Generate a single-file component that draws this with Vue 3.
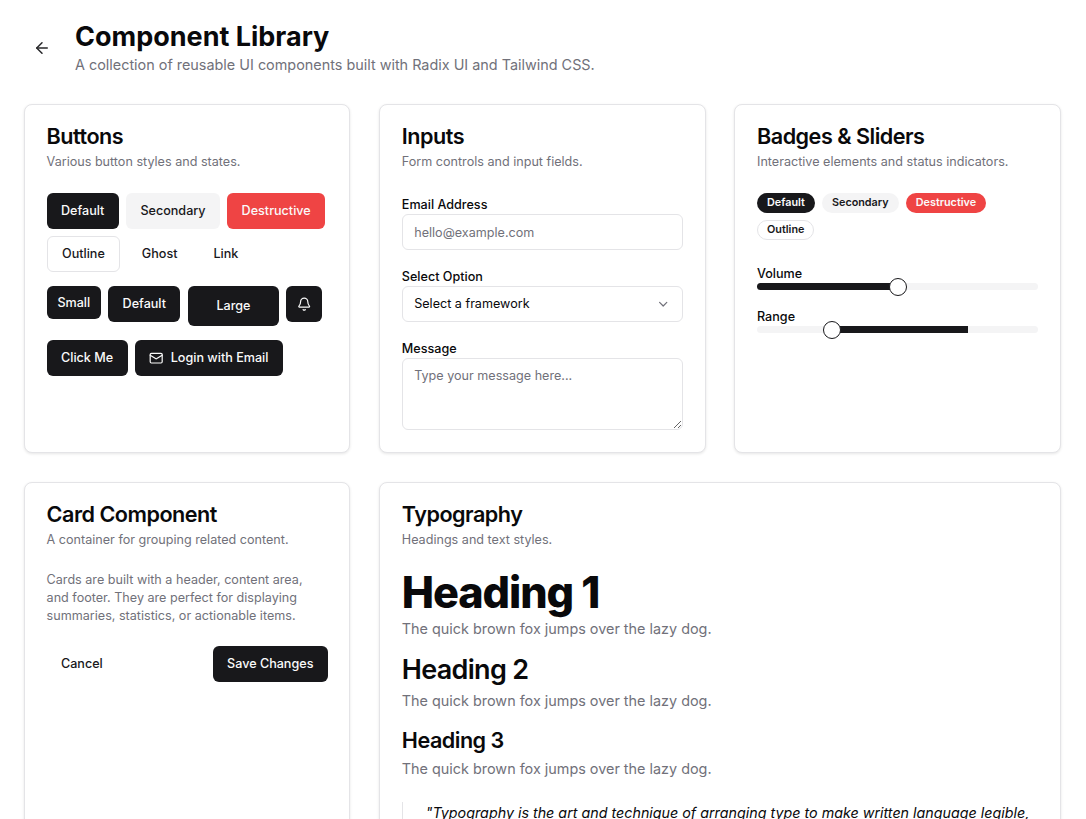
<script setup>
const quick = 'The quick brown fox jumps over the lazy dog.'
</script>

<template>
  <main class="page">
    <header class="head">
      <button class="back" aria-label="Back">
        <svg width="18" height="18" viewBox="0 0 24 24" fill="none" stroke="currentColor" stroke-width="2" stroke-linecap="round" stroke-linejoin="round"><path d="m12 19-7-7 7-7"/><path d="M19 12H5"/></svg>
      </button>
      <div>
        <h1 class="title">Component Library</h1>
        <p class="subtitle">A collection of reusable UI components built with Radix UI and Tailwind CSS.</p>
      </div>
    </header>

    <div class="grid">
      <section class="card">
        <h2 class="card-title">Buttons</h2>
        <p class="card-desc">Various button styles and states.</p>
        <div class="groups">
          <div class="row">
            <button class="btn primary">Default</button>
            <button class="btn secondary">Secondary</button>
            <button class="btn danger">Destructive</button>
            <button class="btn outline">Outline</button>
            <button class="btn ghost">Ghost</button>
            <button class="btn ghost">Link</button>
          </div>
          <div class="row">
            <button class="btn primary small">Small</button>
            <button class="btn primary">Default</button>
            <button class="btn primary large">Large</button>
            <button class="btn primary icon" aria-label="Notifications">
              <svg width="14.4" height="14.4" viewBox="0 0 24 24" fill="none" stroke="currentColor" stroke-width="2" stroke-linecap="round" stroke-linejoin="round"><path d="M10.268 21a2 2 0 0 0 3.464 0"/><path d="M3.262 15.326A1 1 0 0 0 4 17h16a1 1 0 0 0 .74-1.673C19.41 13.956 18 12.499 18 8A6 6 0 0 0 6 8c0 4.499-1.411 5.956-2.738 7.326"/></svg>
            </button>
          </div>
          <div class="row">
            <button class="btn primary">Click Me</button>
            <button class="btn primary with-icon">
              <svg width="14.4" height="14.4" viewBox="0 0 24 24" fill="none" stroke="currentColor" stroke-width="2" stroke-linecap="round" stroke-linejoin="round"><rect x="2" y="4" width="20" height="16" rx="2"/><path d="m22 7-8.97 5.7a1.94 1.94 0 0 1-2.06 0L2 7"/></svg>
              Login with Email
            </button>
          </div>
        </div>
      </section>

      <section class="card">
        <h2 class="card-title">Inputs</h2>
        <p class="card-desc">Form controls and input fields.</p>
        <div class="fields">
          <label class="field">
            <span class="label">Email Address</span>
            <input class="control" type="email" placeholder="hello@example.com" />
          </label>
          <div class="field">
            <span class="label">Select Option</span>
            <button class="control select">
              Select a framework
              <svg width="14.4" height="14.4" viewBox="0 0 24 24" fill="none" stroke="#71717a" stroke-width="2" stroke-linecap="round" stroke-linejoin="round"><path d="m6 9 6 6 6-6"/></svg>
            </button>
          </div>
          <label class="field">
            <span class="label">Message</span>
            <textarea class="control area" placeholder="Type your message here..."></textarea>
          </label>
        </div>
      </section>

      <section class="card">
        <h2 class="card-title">Badges &amp; Sliders</h2>
        <p class="card-desc">Interactive elements and status indicators.</p>
        <div class="badges">
          <span class="badge b-primary">Default</span>
          <span class="badge b-secondary">Secondary</span>
          <span class="badge b-danger">Destructive</span>
          <span class="badge b-outline">Outline</span>
        </div>
        <div class="sliders">
          <div class="slider-block">
            <span class="label">Volume</span>
            <div class="track">
              <div class="fill fill-volume"></div>
              <span class="thumb thumb-volume"></span>
            </div>
          </div>
          <div class="slider-block">
            <span class="label">Range</span>
            <div class="track">
              <div class="fill fill-range"></div>
              <span class="thumb thumb-range"></span>
            </div>
          </div>
        </div>
      </section>

      <section class="card">
        <h2 class="card-title">Card Component</h2>
        <p class="card-desc">A container for grouping related content.</p>
        <p class="card-body">Cards are built with a header, content area, and footer. They are perfect for displaying summaries, statistics, or actionable items.</p>
        <div class="card-foot">
          <button class="btn ghost">Cancel</button>
          <button class="btn primary">Save Changes</button>
        </div>
      </section>

      <section class="card wide">
        <h2 class="card-title">Typography</h2>
        <p class="card-desc">Headings and text styles.</p>
        <div class="type">
          <h1 class="h1">Heading 1</h1>
          <p class="muted m1">{{ quick }}</p>
          <h2 class="h2">Heading 2</h2>
          <p class="muted">{{ quick }}</p>
          <h3 class="h3">Heading 3</h3>
          <p class="muted">{{ quick }}</p>
          <blockquote class="quote">"Typography is the art and technique of arranging type to make written language legible, readable, and appealing when displayed."</blockquote>
        </div>
      </section>
    </div>
  </main>
</template>

<style>
html, body { overflow: hidden; background: #fff; }
</style>

<style scoped>
* { box-sizing: border-box; }
.page {
  width: 1086px;
  padding: 20px 25.2px 24px 24px;
  font-family: Inter, "Noto Sans", sans-serif;
  color: #09090b;
}
.head { display: flex; align-items: center; gap: 15px; margin-bottom: 29px; }
.back {
  width: 36px; height: 36px; border: 0; background: none; color: #27272a;
  display: flex; align-items: center; justify-content: center; padding: 0;
}
.title { margin: 0; font-size: 27px; line-height: 33px; font-weight: 700; }
.subtitle { margin: 2px 0 0; font-size: 14.4px; line-height: 20px; color: #71717a; }
.grid { display: grid; grid-template-columns: repeat(3, 1fr); gap: 28.8px; }
.card {
  border: 1px solid #e4e4e7; border-radius: 8px; background: #fff;
  padding: 17px 21.6px 22px; min-height: 349px;
  box-shadow: 0 1px 3px rgba(0,0,0,.1);
}
.wide { grid-column: span 2; }
.card-title { margin: 0; font-size: 21.6px; line-height: 28px; font-weight: 600; letter-spacing: -0.5px; }
.card-desc { margin: 3px 0 0; font-size: 12.6px; line-height: 18px; color: #71717a; }
.groups { margin-top: 22px; display: flex; flex-direction: column; gap: 14px; }
.row { display: flex; flex-wrap: wrap; align-items: flex-start; gap: 7px 7.2px; }
.btn {
  height: 36px; padding: 0 14.4px; border-radius: 6px; border: 0;
  font: 500 12.6px/18px Inter, sans-serif; display: inline-flex; align-items: center; justify-content: center;
}
.primary { background: #18181b; color: #fafafa; }
.secondary { background: #f4f4f5; color: #18181b; }
.danger { background: #ef4444; color: #fafafa; }
.outline { background: #fff; color: #18181b; border: 1px solid #e4e4e7; }
.ghost { background: transparent; color: #18181b; }
.small { height: 33px; padding: 0 10.8px; }
.large { height: 40px; padding: 0 28.8px; }
.icon { width: 36px; padding: 0; }
.with-icon { gap: 7.2px; }
.fields { margin-top: 25px; display: flex; flex-direction: column; gap: 18px; }
.field { display: flex; flex-direction: column; }
.label { font-size: 12.6px; line-height: 18px; font-weight: 500; color: #09090b; }
.control {
  width: 100%; height: 36px; border: 1px solid #e4e4e7; border-radius: 6px; background: #fff;
  padding: 0 11.4px; font: 400 12.6px/18px Inter, sans-serif; color: #09090b; outline: 0;
}
.control::placeholder { color: #71717a; opacity: 1; }
.select { display: flex; align-items: center; justify-content: space-between; }
.area { height: 72px; padding: 8px 11.4px; display: block; resize: vertical; }
.badges { margin-top: 22px; display: flex; flex-wrap: wrap; gap: 7.2px; }
.badge {
  height: 20px; padding: 0 10px; border-radius: 999px; font-size: 10.8px; font-weight: 600;
  line-height: 18px; display: inline-flex; align-items: center;
}
.b-primary { background: #18181b; color: #fafafa; }
.b-secondary { background: #f4f4f5; color: #18181b; }
.b-danger { background: #ef4444; color: #fafafa; }
.b-outline { background: #fff; color: #18181b; border: 1px solid #e4e4e7; padding: 0 9px; }
.sliders { margin-top: 25px; display: flex; flex-direction: column; gap: 18px; }
.slider-block { display: flex; flex-direction: column; }
.track { position: relative; height: 7px; background: #f4f4f5; border-radius: 999px; }
.fill { position: absolute; top: 0; bottom: 0; background: #18181b; }
.fill-volume { left: 0; width: 50%; border-radius: 999px 0 0 999px; }
.fill-range { left: 25%; width: 50%; }
.thumb {
  position: absolute; top: 50%; width: 18px; height: 18px; border-radius: 50%;
  background: #fff; border: 1.5px solid #18181b; transform: translate(-50%, -50%);
}
.thumb-volume { left: 50%; }
.thumb-range { left: 26.7%; }
.card-body { margin: 22px 0 0; font-size: 12.6px; line-height: 18px; color: #71717a; }
.card-foot { margin-top: 21px; display: flex; justify-content: space-between; }
.type { margin-top: 20px; }
.h1 { margin: 0; font-size: 43.2px; line-height: 47px; font-weight: 800; letter-spacing: -1.1px; }
.h2 { margin: 15px 0 0; font-size: 27px; line-height: 32px; font-weight: 600; letter-spacing: -0.7px; }
.h3 { margin: 15px 0 0; font-size: 21.6px; line-height: 28px; font-weight: 600; letter-spacing: -0.5px; }
.muted { margin: 5px 0 0; font-size: 14.4px; line-height: 20px; color: #71717a; }
.m1 { margin-top: 3px; }
.quote { margin: 23px 0 0; padding: 0 0 0 23px; border-left: 1px solid #e4e4e7; font-size: 14.3px; line-height: 22px; font-style: italic; }
</style>
